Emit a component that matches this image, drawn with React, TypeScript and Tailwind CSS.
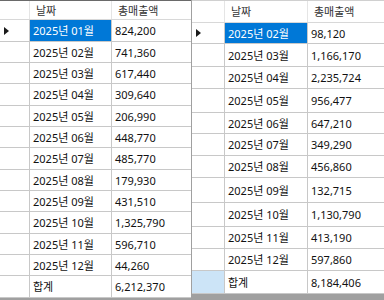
import React from 'react';

type Row = { date: string; amount: string; h: number };

const heightClass: Record<number, string> = {
  21: 'h-[21px]',
  22: 'h-[22px]',
  23: 'h-[23px]',
  24: 'h-[24px]',
  25: 'h-[25px]',
};

const leftRows: Row[] = [
  { date: '2025년 01월', amount: '824,200', h: 22 },
  { date: '2025년 02월', amount: '741,360', h: 21 },
  { date: '2025년 03월', amount: '617,440', h: 21 },
  { date: '2025년 04월', amount: '309,640', h: 22 },
  { date: '2025년 05월', amount: '206,990', h: 21 },
  { date: '2025년 06월', amount: '448,770', h: 21 },
  { date: '2025년 07월', amount: '485,770', h: 22 },
  { date: '2025년 08월', amount: '179,930', h: 21 },
  { date: '2025년 09월', amount: '431,510', h: 21 },
  { date: '2025년 10월', amount: '1,325,790', h: 22 },
  { date: '2025년 11월', amount: '596,710', h: 21 },
  { date: '2025년 12월', amount: '44,260', h: 21 },
  { date: '합계', amount: '6,212,370', h: 22 },
];

const rightRows: Row[] = [
  { date: '2025년 02월', amount: '98,120', h: 21 },
  { date: '2025년 03월', amount: '1,166,170', h: 23 },
  { date: '2025년 04월', amount: '2,235,724', h: 22 },
  { date: '2025년 05월', amount: '956,477', h: 24 },
  { date: '2025년 06월', amount: '647,210', h: 21 },
  { date: '2025년 07월', amount: '349,290', h: 22 },
  { date: '2025년 08월', amount: '456,860', h: 22 },
  { date: '2025년 09월', amount: '132,715', h: 25 },
  { date: '2025년 10월', amount: '1,130,790', h: 24 },
  { date: '2025년 11월', amount: '413,190', h: 22 },
  { date: '2025년 12월', amount: '597,860', h: 22 },
  { date: '합계', amount: '8,184,406', h: 23 },
];

const Arrow = () => (
  <svg width="5" height="8" viewBox="0 0 5 8" className="ml-[4px]">
    <polygon points="0,0 5,4 0,8" fill="#1a1a1a" />
  </svg>
);

type GridProps = {
  rows: Row[];
  headerClass: string;
  rowHeaderClass: string;
  dateClass: string;
  topLine: string;
  highlightLastHeader?: boolean;
};

const Grid = ({ rows, headerClass, rowHeaderClass, dateClass, topLine, highlightLastHeader }: GridProps) => (
  <div className={`flex flex-col flex-1 h-full bg-[#a0a0a0] border-t ${topLine}`}>
    {/* column headers */}
    <div className={`flex bg-white border-b border-[#d8d8d8] text-[#333] ${headerClass}`}>
      <div className={`${rowHeaderClass} border-r border-[#e5e5e5]`} />
      <div className={`${dateClass} border-r border-[#e5e5e5] pl-[6px] flex items-center`}>날짜</div>
      <div className="flex-1 pl-[6px] flex items-center">총매출액</div>
    </div>

    {rows.map((r, i) => {
      const selected = i === 0;
      const last = i === rows.length - 1;
      return (
        <div key={i} className={`flex bg-white ${heightClass[r.h]}`}>
          <div
            className={`${rowHeaderClass} border-r border-b border-[#c8c8c8] flex items-center ${
              highlightLastHeader && last ? 'bg-[#cce4f7]' : 'bg-white'
            }`}
          >
            {selected && <Arrow />}
          </div>
          <div
            className={`${dateClass} border-r border-b border-[#c8c8c8] pl-[3px] flex items-center ${
              selected ? 'bg-[#0078d7] text-white' : ''
            }`}
          >
            {r.date}
          </div>
          <div className="flex-1 border-b border-[#c8c8c8] pl-[3px] flex items-center">{r.amount}</div>
        </div>
      );
    })}
  </div>
);

export default function App() {
  return (
    <div
      className="w-[384px] h-[300px] flex bg-[#a0a0a0] overflow-hidden text-[11px] text-[#111] leading-none"
      style={{ fontFamily: '"Noto Sans", "Noto Sans CJK KR", sans-serif' }}
    >
      <div className="w-[192px] h-full flex border-r border-[#a0a0a0]">
        <Grid
          rows={leftRows}
          headerClass="h-[19px]"
          rowHeaderClass="w-[30px]"
          dateClass="w-[82px]"
          topLine="border-[#6a6a6a]"
        />
      </div>
      <div className="flex-1 h-full flex">
        <Grid
          rows={rightRows}
          headerClass="h-[22px]"
          rowHeaderClass="w-[33px]"
          dateClass="w-[83px]"
          topLine="border-[#d0d0d0]"
          highlightLastHeader
        />
      </div>
    </div>
  );
}
